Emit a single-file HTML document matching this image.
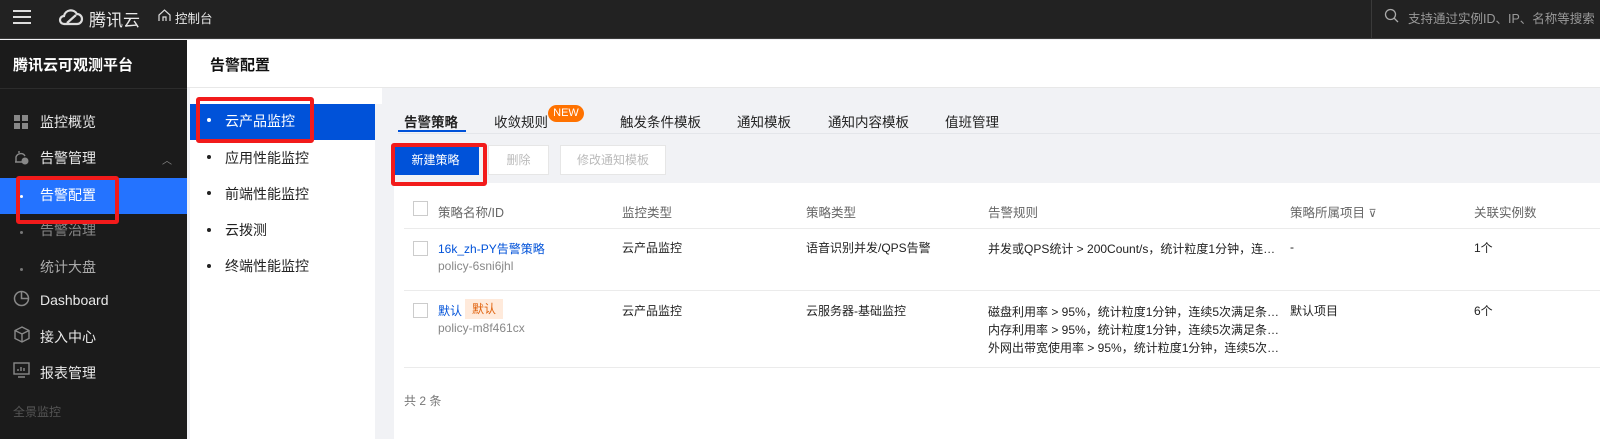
<!DOCTYPE html>
<html><head><meta charset="utf-8"><style>
*{margin:0;padding:0;box-sizing:border-box}
body{width:1600px;height:439px;overflow:hidden;position:relative;background:#f1f2f5;font-family:"Liberation Sans","Noto Sans CJK SC",sans-serif;font-size:13px;color:#000}
.a{position:absolute}
.top{left:0;top:0;width:1600px;height:39px;background:#222;border-bottom:1px solid #3a3a3a}
.side{left:0;top:40px;width:187px;height:399px;background:#1b1b1b}
.si{position:absolute;left:40px;color:#e8e8e8;font-size:14px}
.dot{position:absolute;width:3px;height:3px;border-radius:50%;background:#777}
.hdr{left:187px;top:40px;width:1413px;height:48px;background:#fff;border-bottom:1px solid #e8e8e8}
.sub{left:190px;top:88px;width:192px;height:351px;background:#fff}
.sub div{position:absolute;left:35px;font-size:14px;color:#222}
.sub span{position:absolute;left:17px;width:4px;height:4px;border-radius:50%;background:#222}
.tab{position:absolute;top:111px;font-size:13.5px;color:#222}
.btn{position:absolute;top:145px;height:30px;border:1px solid #e6e6e6;background:#fff;color:#bbb;font-size:12px;text-align:center;line-height:28px}
.card{left:394px;top:183px;width:1206px;height:256px;background:#fff}
.th{position:absolute;top:202px;color:#666;font-size:12.5px}
.td{position:absolute;color:#222;font-size:12px}
.cb{position:absolute;left:413px;width:15px;height:15px;border:1px solid #ccc;background:#fff}
.line{position:absolute;left:404px;width:1196px;height:1px;background:#ebebeb}
.red{position:absolute;border:4px solid #f21b1b;border-radius:3px}
</style></head><body>
<div class="a top"></div>
<div class="a" style="left:13px;top:10px;width:18px;height:2px;background:#ddd;box-shadow:0 6px 0 #ddd,0 12px 0 #ddd"></div>
<svg class="a" style="left:58px;top:8px" width="26" height="18" viewBox="0 0 26 18"><path d="M6 16 H19 A5 5 0 0 0 19 6 A7 7 0 0 0 6 8 A4 4 0 0 0 6 16 Z M9 15 L18 7" fill="none" stroke="#ddd" stroke-width="2.2"/></svg>
<div class="a" style="left:89px;top:6px;color:#e8e8e8;font-size:17px">腾讯云</div>
<svg class="a" style="left:158px;top:9px" width="13" height="13" viewBox="0 0 13 13"><path d="M1 12 V6 L6.5 1 L12 6 V12 M5 12 V8 H8 V12" fill="none" stroke="#ddd" stroke-width="1.2"/></svg>
<div class="a" style="left:175px;top:8px;color:#e8e8e8;font-size:12.5px">控制台</div>
<div class="a" style="left:1371px;top:0;width:1px;height:39px;background:#3a3a3a"></div>
<svg class="a" style="left:1384px;top:8px" width="15" height="15" viewBox="0 0 15 15"><circle cx="6.5" cy="6.5" r="5" fill="none" stroke="#aaa" stroke-width="1.3"/><path d="M10 10 L14 14" stroke="#aaa" stroke-width="1.3"/></svg>
<div class="a" style="left:1408px;top:8px;color:#999;font-size:12.5px;white-space:nowrap">支持通过实例ID、IP、名称等搜索</div>

<div class="a side"></div>
<div class="a" style="left:13px;top:54px;color:#fff;font-size:15px;font-weight:bold">腾讯云可观测平台</div>
<div class="a" style="left:0;top:88px;width:187px;height:1px;background:#2c2c2c"></div>
<svg class="a" style="left:14px;top:115px" width="14" height="14"><rect x="0" y="0" width="6" height="6" fill="#888"/><rect x="8" y="0" width="6" height="6" fill="#888"/><rect x="0" y="8" width="6" height="6" fill="#888"/><rect x="8" y="8" width="6" height="6" fill="#888"/></svg>
<div class="si" style="top:112px">监控概览</div>
<svg class="a" style="left:13px;top:149px" width="17" height="17" viewBox="0 0 17 17"><path d="M3 13 V8 A5 5 0 0 1 12 7 M2 13 H9 M6 2 V4" fill="none" stroke="#888" stroke-width="1.4"/><circle cx="12" cy="12" r="3.5" fill="#888"/></svg>
<div class="si" style="top:148px">告警管理</div>
<div class="a" style="left:162px;top:152px;color:#888;font-size:10px">︿</div>
<div class="a" style="left:0;top:178px;width:187px;height:36px;background:#2473ff"></div>
<div class="dot" style="left:20px;top:195px;background:#fff"></div>
<div class="si" style="top:185px;color:#fff">告警配置</div>
<div class="dot" style="left:20px;top:231px"></div>
<div class="si" style="top:220px;color:#888">告警治理</div>
<div class="dot" style="left:20px;top:268px"></div>
<div class="si" style="top:257px;color:#aaa">统计大盘</div>
<svg class="a" style="left:13px;top:290px" width="17" height="17"><circle cx="8.5" cy="8.5" r="7" fill="none" stroke="#888" stroke-width="1.5"/><path d="M8.5 2 V8.5 H15" fill="none" stroke="#888" stroke-width="1.5"/></svg>
<div class="si" style="top:292px">Dashboard</div>
<svg class="a" style="left:14px;top:326px" width="16" height="17" viewBox="0 0 16 17"><path d="M8 1 L15 4.5 V12.5 L8 16 L1 12.5 V4.5 Z M1 4.5 L8 8 L15 4.5 M8 8 V16" fill="none" stroke="#888" stroke-width="1.4"/></svg>
<div class="si" style="top:327px">接入中心</div>
<svg class="a" style="left:13px;top:362px" width="17" height="16"><rect x="1" y="1" width="15" height="11" fill="none" stroke="#888" stroke-width="1.4"/><path d="M5 15 H12 M5 9 V7 M8 9 V5 M11 9 V6" stroke="#888" stroke-width="1.4"/></svg>
<div class="si" style="top:363px">报表管理</div>
<div class="a" style="left:13px;top:403px;color:#555;font-size:12px">全景监控</div>

<div class="a hdr"></div>
<div class="a" style="left:210px;top:54px;font-size:15px;font-weight:bold;color:#111">告警配置</div>
<div class="a sub">
<div style="top:16px;left:0;width:185px;height:36px;background:#0052d9"></div>
<span style="top:30px;background:#fff"></span><div style="top:23px;color:#fff">云产品监控</div>
<span style="top:67px"></span><div style="top:60px">应用性能监控</div>
<span style="top:103px"></span><div style="top:96px">前端性能监控</div>
<span style="top:140px"></span><div style="top:132px">云拨测</div>
<span style="top:176px"></span><div style="top:168px">终端性能监控</div>
</div>
<div class="a" style="left:375px;top:104px;width:7px;height:335px;background:#f1f2f5"></div>

<div class="tab" style="left:404px;font-weight:bold">告警策略</div>
<div class="a" style="left:398px;top:130px;width:68px;height:2px;background:#0052d9"></div>
<div class="a" style="left:398px;top:133px;width:1202px;height:1px;background:#e4e6ea"></div>
<div class="tab" style="left:494px">收敛规则</div>
<div class="a" style="left:548px;top:105px;width:36px;height:17px;border-radius:9px;background:#ff7200;color:#fff;font-size:11px;text-align:center;line-height:17px">NEW</div>
<div class="tab" style="left:620px">触发条件模板</div>
<div class="tab" style="left:737px">通知模板</div>
<div class="tab" style="left:828px">通知内容模板</div>
<div class="tab" style="left:945px">值班管理</div>

<div class="btn" style="left:392px;width:87px;background:#0052d9;border-color:#0052d9;color:#fff">新建策略</div>
<div class="btn" style="left:488px;width:61px">删除</div>
<div class="btn" style="left:560px;width:106px">修改通知模板</div>

<div class="a card"></div>
<div class="cb" style="top:201px"></div>
<div class="th" style="left:438px">策略名称/ID</div>
<div class="th" style="left:622px">监控类型</div>
<div class="th" style="left:806px">策略类型</div>
<div class="th" style="left:988px">告警规则</div>
<div class="th" style="left:1290px">策略所属项目 <span style="font-size:11px">⊽</span></div>
<div class="th" style="left:1474px">关联实例数</div>
<div class="line" style="top:228px"></div>

<div class="cb" style="top:241px"></div>
<div class="td" style="left:438px;top:240px;color:#0052d9">16k_zh-PY告警策略</div>
<div class="td" style="left:438px;top:259px;color:#888">policy-6sni6jhl</div>
<div class="td" style="left:622px;top:239px">云产品监控</div>
<div class="td" style="left:806px;top:239px">语音识别并发/QPS告警</div>
<div class="td" style="left:988px;top:240px">并发或QPS统计 &gt; 200Count/s，统计粒度1分钟，连…</div>
<div class="td" style="left:1290px;top:240px">-</div>
<div class="td" style="left:1474px;top:239px">1个</div>
<div class="line" style="top:290px"></div>

<div class="cb" style="top:303px"></div>
<div class="td" style="left:438px;top:302px;color:#0052d9">默认</div>
<div class="a" style="left:465px;top:299px;width:38px;height:20px;background:#ffeadb;color:#e0620d;font-size:12px;text-align:center;line-height:20px">默认</div>
<div class="td" style="left:438px;top:321px;color:#888">policy-m8f461cx</div>
<div class="td" style="left:622px;top:302px">云产品监控</div>
<div class="td" style="left:806px;top:302px">云服务器-基础监控</div>
<div class="td" style="left:988px;top:303px;line-height:18px">磁盘利用率 &gt; 95%，统计粒度1分钟，连续5次满足条…<br>内存利用率 &gt; 95%，统计粒度1分钟，连续5次满足条…<br>外网出带宽使用率 &gt; 95%，统计粒度1分钟，连续5次…</div>
<div class="td" style="left:1290px;top:302px">默认项目</div>
<div class="td" style="left:1474px;top:302px">6个</div>
<div class="line" style="top:367px"></div>
<div class="td" style="left:404px;top:392px;color:#777">共 2 条</div>

<div class="red" style="left:16px;top:176px;width:103px;height:48px"></div>
<div class="red" style="left:196px;top:97px;width:118px;height:46px"></div>
<div class="red" style="left:391px;top:143px;width:96px;height:43px"></div>
</body></html>
